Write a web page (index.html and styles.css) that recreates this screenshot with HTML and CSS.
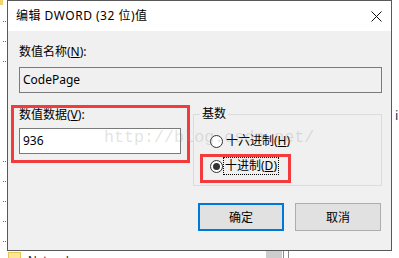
FILE: index.html
```html
<!DOCTYPE html>
<html lang="zh-CN">
<head>
  <meta charset="UTF-8" />
  <meta name="viewport" content="width=device-width, initial-scale=1.0" />
  <title>编辑 DWORD (32 位)值</title>
  <link rel="stylesheet" href="styles.css">
</head>
<body>
  <div class="desktop">
    <span class="corner-folder"></span>
    <div class="tree-dots">
      <i></i><i></i><i></i><i class="gap"></i><i></i><i></i><i></i><i></i>
    </div>
    <span class="peek-text">i.</span>
    <div class="taskbar-strip">
      <span class="folder"></span>
      <span class="net-label">Network</span>
      <span class="scroll-thumb"></span>
      <span class="scroll-line"></span>
      <span class="scroll-line"></span>
    </div>
  </div>

  <div class="dialog">
    <div class="titlebar">
      <span class="title">编辑 DWORD (32 位)值</span>
      <svg class="close" width="11" height="11" viewBox="0 0 11 11">
        <path d="M0.5 0.5 L10.5 10.5 M10.5 0.5 L0.5 10.5" stroke="#111" stroke-width="1" fill="none" />
      </svg>
    </div>

    <div class="content">
      <label class="field-label">数值名称(<u>N</u>):</label>
      <div class="textbox readonly">CodePage</div>

      <div class="row">
        <div class="value-field marked">
          <label class="field-label">数值数据(<u>V</u>):</label>
          <div class="textbox">936</div>
        </div>

        <fieldset class="base-group">
          <legend>基数</legend>
          <div class="radio-row">
            <span class="radio"></span>
            <span class="radio-text">十六进制(<u>H</u>)</span>
          </div>
          <div class="radio-row marked">
            <span class="radio checked"></span>
            <span class="radio-text focused">十进制(<u>D</u>)</span>
          </div>
        </fieldset>
      </div>

      <div class="buttons">
        <button class="btn default">确定</button>
        <button class="btn">取消</button>
      </div>
    </div>

    <div class="watermark">http://blog.csdn.net/</div>
  </div>
</body>
</html>
```

FILE: styles.css
```css
body {
  margin: 0;
  width: 399px;
  height: 258px;
  overflow: hidden;
  background: #ffffff;
  font-family: "Noto Sans", "Noto Sans CJK SC", sans-serif;
  font-size: 12px;
  color: #000;
  position: relative;
}

/* things behind the dialog */
.corner-folder {
  position: absolute;
  left: 0;
  top: 0;
  width: 3px;
  height: 5px;
  background: #f5d36b;
}

.tree-dots {
  position: absolute;
  left: 3px;
  top: 21px;
  display: flex;
  flex-direction: column;
  gap: 19px;
}

.tree-dots i {
  display: block;
  width: 3px;
  height: 1px;
  background: linear-gradient(90deg, #666 1px, transparent 1px, transparent 2px, #666 2px);
}

.tree-dots i.gap {
  margin-top: 80px;
}

.peek-text {
  position: absolute;
  left: 395px;
  top: 106px;
  color: #1a2a6a;
  font-size: 13px;
}

.taskbar-strip {
  position: absolute;
  left: 0;
  top: 251px;
  width: 399px;
  height: 7px;
  overflow: hidden;
  display: flex;
  align-items: flex-start;
}

.taskbar-strip .folder {
  margin: 1px 0 0 8px;
  width: 11px;
  height: 6px;
  background: #ffe596;
  border: 1px solid #e5c45a;
  border-bottom: none;
}

.taskbar-strip .net-label {
  margin-left: 7px;
  font-family: "Liberation Sans", sans-serif;
  font-size: 12px;
  line-height: 12px;
  margin-top: 4px;
  color: #1a1a40;
}

.taskbar-strip .scroll-thumb {
  margin-left: auto;
  width: 16px;
  height: 7px;
  background: #cdcdcd;
}

.taskbar-strip .scroll-line {
  width: 1px;
  height: 7px;
  background: #888;
  margin-left: 1px;
}

.taskbar-strip .scroll-line + .scroll-line {
  margin-left: 4px;
  margin-right: 110px;
}

/* dialog */
.dialog {
  position: absolute;
  left: 7px;
  top: 0;
  width: 385px;
  height: 251px;
  box-sizing: border-box;
  border: 1px solid #595959;
  background: #f0f0f0;
  display: flex;
  flex-direction: column;
}

.titlebar {
  height: 30px;
  background: #ffffff;
  display: flex;
  align-items: center;
  justify-content: space-between;
  padding: 0 9px 0 8px;
}

.title {
  line-height: 16px;
  letter-spacing: 0.5px;
}

.content {
  padding: 13px 9px 0 11px;
}

.field-label {
  display: block;
  line-height: 16px;
}

.textbox {
  margin-top: 7px;
  height: 26px;
  box-sizing: border-box;
  border: 1px solid #7a7a7a;
  background: #fff;
  padding-left: 3px;
  line-height: 24px;
}

.textbox.readonly {
  background: #f0f0f0;
}

.row {
  margin-top: 14px;
  display: grid;
  grid-template-columns: 162px 1fr;
  column-gap: 12px;
  align-items: start;
}

.value-field .textbox {
  margin-top: 5px;
}

.marked {
  position: relative;
}

.value-field.marked::after {
  content: "";
  position: absolute;
  left: -8px;
  top: -2px;
  width: 179px;
  height: 58px;
  box-sizing: border-box;
  border: 3px solid #f43b3b;
}

.base-group {
  margin: -1px 0 0 0;
  padding: 0 6px 9px 6px;
  border: 1px solid #dcdcdc;
  min-width: 0;
}

.base-group legend {
  padding: 0 2px;
  line-height: 16px;
}

.radio-row {
  display: flex;
  align-items: center;
  height: 20px;
  margin-top: 9px;
}

.radio-row + .radio-row {
  margin-top: 5px;
}

.radio-row.marked::after {
  content: "";
  position: absolute;
  left: 0;
  top: -2px;
  width: 91px;
  height: 29px;
  box-sizing: border-box;
  border: 3px solid #f43b3b;
}

.radio {
  margin-left: 10px;
  width: 13px;
  height: 13px;
  box-sizing: border-box;
  border: 1px solid #333;
  border-radius: 50%;
  background: #fff;
  display: flex;
  align-items: center;
  justify-content: center;
}

.radio.checked::before {
  content: "";
  width: 7px;
  height: 7px;
  border-radius: 50%;
  background: #333;
}

.radio-text {
  margin-left: 2px;
  line-height: 16px;
  padding: 0 1px;
}

.radio-text.focused {
  margin-left: 1px;
  outline: 1px dotted #000;
  outline-offset: 0;
  line-height: 16px;
}

.buttons {
  margin-top: 17px;
  display: flex;
  justify-content: flex-end;
  gap: 11px;
  padding-right: 1px;
}

.btn {
  width: 86px;
  height: 28px;
  box-sizing: border-box;
  background: #e1e1e1;
  border: 1px solid #adadad;
  font-family: "Noto Sans", "Noto Sans CJK SC", sans-serif;
  font-size: 12px;
  color: #000;
  padding: 0;
}

.btn.default {
  border: 2px solid #0078d7;
}

.watermark {
  position: absolute;
  left: 96px;
  top: 127px;
  font-family: "Liberation Mono", monospace;
  font-size: 16.7px;
  line-height: 20px;
  color: rgba(150, 140, 120, 0.25);
  pointer-events: none;
}
```
